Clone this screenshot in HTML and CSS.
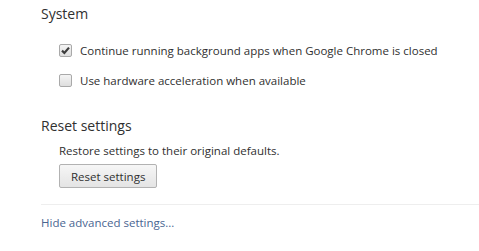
FILE: index.html
```html
<!DOCTYPE html>
<html lang="en">
<head>
  <meta charset="UTF-8">
  <title>Settings</title>
  <link rel="stylesheet" href="styles.css">
</head>
<body>
  <div class="page">
    <section class="group">
      <h3>System</h3>
      <div class="group-body">
        <label class="check-row">
          <input type="checkbox" checked>
          <span class="box"><svg width="11" height="11" viewBox="0 0 11 11"><path d="M2 5.6 L4.4 8 L9 2.6" fill="none" stroke="#3c3c3c" stroke-width="2.2"/></svg></span>
          <span>Continue running background apps when Google Chrome is closed</span>
        </label>
        <label class="check-row">
          <input type="checkbox">
          <span class="box"></span>
          <span>Use hardware acceleration when available</span>
        </label>
      </div>
    </section>

    <section class="group reset">
      <h3>Reset settings</h3>
      <div class="group-body">
        <p class="desc">Restore settings to their original defaults.</p>
        <button class="btn">Reset settings</button>
      </div>
    </section>

    <div class="footer">
      <a href="#" class="link">Hide advanced settings...</a>
    </div>
  </div>
</body>
</html>
```

FILE: styles.css
```css
body {
  margin: 0;
  padding: 0;
  background: #fff;
  color: #303030;
  font-family: 'Open Sans', sans-serif;
  font-size: 11.5px;
}
.page {
  padding: 4px 0 0 41px;
}
h3 {
  margin: 0;
  font-size: 14px;
  font-weight: 400;
  color: #303030;
}
.group-body {
  padding-left: 18px;
}
.group h3 + .group-body {
  margin-top: 12px;
}
.check-row {
  display: flex;
  align-items: center;
  height: 30px;
  gap: 8px;
}
.check-row input {
  display: none;
}
.box {
  box-sizing: border-box;
  width: 13px;
  height: 13px;
  border: 1px solid #a9a9a9;
  border-radius: 2px;
  background: linear-gradient(#f4f4f4, #dedede);
  display: flex;
  align-items: center;
  justify-content: center;
}
.box svg {
  display: block;
}
.reset {
  margin-top: 21px;
}
.reset h3 + .group-body {
  margin-top: 8px;
}
.desc {
  margin: 0 0 6px;
}
.btn {
  box-sizing: border-box;
  height: 24px;
  font-family: inherit;
  font-size: 11.5px;
  color: #303030;
  padding: 0 11px;
  border: 1px solid #b2b2b2;
  border-radius: 2px;
  background: linear-gradient(#f6f6f6, #e4e4e4);
}
.footer {
  margin-top: 16px;
  border-top: 1px solid #eeeeee;
  padding-top: 10px;
}
.link {
  color: #4a6591;
  text-decoration: none;
}
```
